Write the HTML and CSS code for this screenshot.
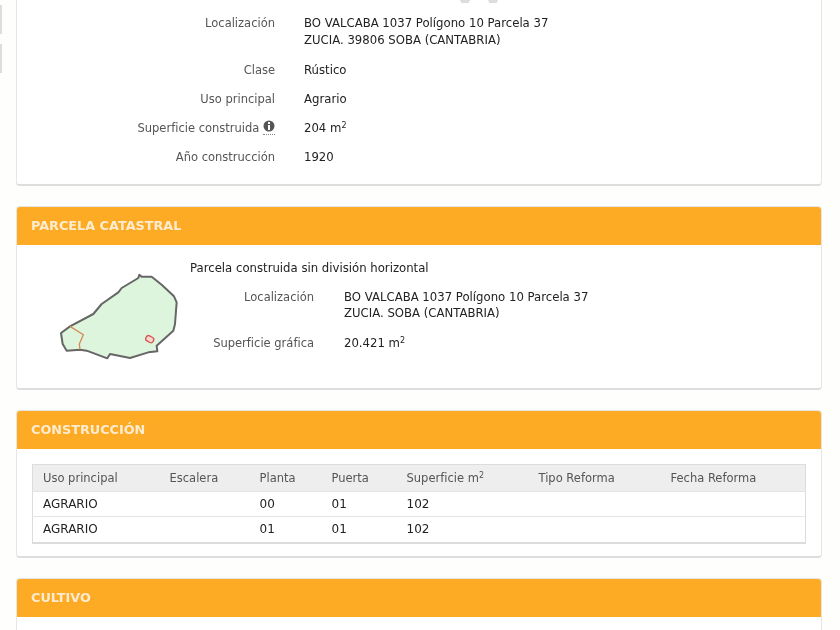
FILE: index.html
```html
<!DOCTYPE html>
<html lang="es">
<head>
<meta charset="utf-8">
<title>Consulta catastral</title>
<link rel="stylesheet" href="styles.css">
</head>
<body>
<div class="side-tabs"><span class="side-tab"></span><span class="side-tab"></span></div>
<main class="page">
  <section class="card card-first">
    <div class="top-icons">
      <svg class="top-icon" viewBox="0 0 12 4"><path d="M1 1h10M2 3h8"/></svg>
      <svg class="top-icon" viewBox="0 0 12 4"><path d="M1 1h10M2 3h8"/></svg>
    </div>
    <dl class="facts facts-main">
      <dt>Localización</dt>
      <dd>BO VALCABA 1037 Polígono 10 Parcela 37<br>ZUCIA. 39806 SOBA (CANTABRIA)</dd>
      <dt>Clase</dt>
      <dd>Rústico</dd>
      <dt>Uso principal</dt>
      <dd>Agrario</dd>
      <dt>Superficie construida <span class="info"><svg viewBox="0 0 12 12"><circle cx="6" cy="6" r="5.5"/><rect class="info-i" x="5" y="2" width="2" height="2"/><rect class="info-i" x="5" y="5" width="2" height="5"/></svg></span></dt>
      <dd>204 m<sup>2</sup></dd>
      <dt>Año construcción</dt>
      <dd>1920</dd>
    </dl>
  </section>

  <section class="card">
    <h2 class="card-title">PARCELA CATASTRAL</h2>
    <div class="parcel">
      <svg class="parcel-map" viewBox="0 0 420 315">
        <path class="plot" d="M268 32L275 38L305 38L335 62L372 97L380 115L375 180L370 200L320 245L322 262L295 265L240 282L180 270L172 283L110 260L90 257L50 260L38 240L33 207L60 187L130 150L155 120L205 85L215 72L265 42Z"/>
        <path class="plot-line" d="M60 187L100 212L88 240L90 257"/>
        <rect class="plot-house" x="287" y="217" width="24" height="17" rx="7" transform="rotate(28 299 226)"/>
      </svg>
      <div class="parcel-body">
        <p class="parcel-lead">Parcela construida sin división horizontal</p>
        <dl class="facts facts-parcel">
          <dt>Localización</dt>
          <dd>BO VALCABA 1037 Polígono 10 Parcela 37<br>ZUCIA. SOBA (CANTABRIA)</dd>
          <dt>Superficie gráfica</dt>
          <dd>20.421 m<sup>2</sup></dd>
        </dl>
      </div>
    </div>
  </section>

  <section class="card">
    <h2 class="card-title card-title-short">CONSTRUCCIÓN</h2>
    <div class="table-wrap">
      <table class="units">
        <colgroup>
          <col class="c-uso"><col class="c-esc"><col class="c-pla"><col class="c-pue"><col class="c-sup"><col class="c-tip"><col>
        </colgroup>
        <thead>
          <tr><th>Uso principal</th><th>Escalera</th><th>Planta</th><th>Puerta</th><th>Superficie m<sup>2</sup></th><th>Tipo Reforma</th><th>Fecha Reforma</th></tr>
        </thead>
        <tbody>
          <tr><td>AGRARIO</td><td></td><td>00</td><td>01</td><td>102</td><td></td><td></td></tr>
          <tr><td>AGRARIO</td><td></td><td>01</td><td>01</td><td>102</td><td></td><td></td></tr>
        </tbody>
      </table>
    </div>
  </section>

  <section class="card card-last">
    <h2 class="card-title card-title-short">CULTIVO</h2>
  </section>
</main>
</body>
</html>
```
FILE: styles.css
```css
* { box-sizing: border-box; }
html, body { margin: 0; height: 630px; overflow: hidden; background: #fefefd; }
body {
  font-family: "DejaVu Sans", Verdana, sans-serif;
  font-size: 11.7px;
  line-height: 17px;
  color: #222;
  position: relative;
  filter: blur(0.5px);
}
sup { font-size: 8px; line-height: 0; vertical-align: 4px; }

.side-tabs { position: absolute; left: 0; top: 5px; display: flex; flex-direction: column; gap: 10px; }
.side-tab { display: block; width: 2px; height: 29px; background: #ddd; }

.page { display: flex; flex-direction: column; gap: 20px; padding: 0 18px 0 16px; margin-top: -6px; }

.card {
  background: #fff;
  border: 1px solid #e6e6e6;
  border-bottom: 2px solid #dedede;
  border-radius: 4px;
  overflow: hidden;
}
.card-first { height: 192px; border-top: 0; border-radius: 0 0 4px 4px; padding-top: 13px; position: relative; }
.card-last { height: 80px; }

.top-icons { position: absolute; top: 5px; left: 442px; display: flex; gap: 16px; }
.top-icon { width: 12px; height: 4px; display: block; }
.top-icon path { stroke: #bbb; stroke-width: 1; fill: none; }

.card-title {
  margin: -1px -1px 0;
  height: 39px;
  padding: 0 15px;
  background: #fdaa25;
  color: #fdecd0;
  font-size: 12.8px;
  font-weight: 700;
  line-height: 39px;
}
.card-title-short { line-height: 40px; }

.facts { display: grid; margin: 0; row-gap: 12px; column-gap: 29px; }
.facts dt { color: #555; text-align: right; font-size: 11.5px; }
.facts dd { margin: 0; }
.facts-main { grid-template-columns: 258px 1fr; padding-top: 8px; }
.facts-main dd:first-of-type { padding-bottom: 1px; }
.facts-parcel { grid-template-columns: 124px 1fr; margin-top: 12px; column-gap: 30px; row-gap: 14px; line-height: 16px; }

.info { display: inline-block; width: 12px; height: 15px; vertical-align: -3px; border-bottom: 1px dotted #888; }
.info svg { display: block; width: 12px; height: 12px; }
.info circle { fill: #555; }
.info-i { fill: #fff; }

.parcel { display: flex; height: 143px; }
.parcel-map { width: 140px; height: 105px; flex: none; margin: 19px 0 0 33px; }
.parcel-body { padding-top: 15px; }
.parcel-lead { margin: 0; }
.plot { fill: #dcf5dc; stroke: #666; stroke-width: 6; stroke-linejoin: round; }
.plot-line { fill: none; stroke: #d78a58; stroke-width: 4; }
.plot-house { fill: #f8d8d0; stroke: #d9534f; stroke-width: 4; }

.table-wrap { padding: 15px 15px 12px; }
.units {
  width: 100%;
  table-layout: fixed;
  border-collapse: collapse;
  border: 1px solid #dcdcdc;
  border-bottom-width: 2px;
}
.units th, .units td { padding: 4px 10px 3px; height: 25px; text-align: left; overflow: hidden; white-space: nowrap; }
.units th { background: #eeeeee; color: #555; font-weight: 400; font-size: 11.5px; height: 27px; padding: 5px 10px 4px; }
.units td { border-top: 1px solid #e4e4e4; font-size: 12px; }
.units tbody tr:last-child td { padding-bottom: 4px; }
.c-uso { width: 127px; }
.c-esc { width: 90px; }
.c-pla { width: 72px; }
.c-pue { width: 75px; }
.c-sup { width: 132px; }
.c-tip { width: 132px; }
```
